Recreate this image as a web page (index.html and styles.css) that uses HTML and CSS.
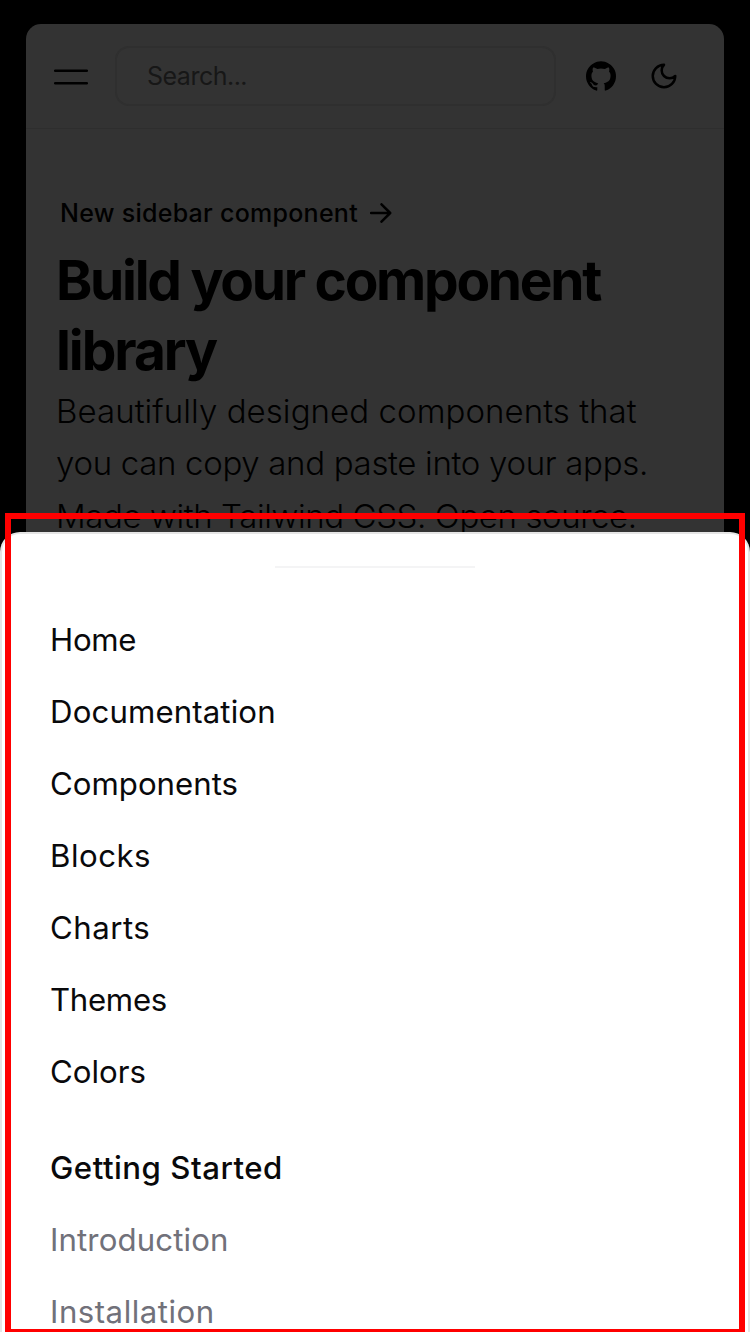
FILE: index.html
```
<!DOCTYPE html>
<html lang="en">
<head>
<meta charset="utf-8">
<title>Build your component library</title>
<link rel="stylesheet" href="styles.css">
</head>
<body>
<div class="page">
  <header class="topbar">
    <svg class="menu" viewBox="0 0 34 18"><path d="M1.2 2.7H32.8M1.2 15.3H32.8"/></svg>
    <div class="search"><span>Search...</span></div>
    <svg class="github" viewBox="0 0 438.549 438.549"><path d="M409.132 114.573c-19.608-33.596-46.205-60.194-79.798-79.8-33.598-19.607-70.277-29.408-110.063-29.408-39.781 0-76.472 9.804-110.063 29.408-33.596 19.605-60.192 46.204-79.8 79.8C9.803 148.168 0 184.854 0 224.63c0 47.78 13.94 90.745 41.827 128.906 27.884 38.164 63.906 64.572 108.063 79.227 5.14.954 8.945.283 11.419-1.996 2.475-2.282 3.711-5.14 3.711-8.562 0-.571-.049-5.708-.144-15.417a2549.81 2549.81 0 01-.144-25.406l-6.567 1.136c-4.187.767-9.469 1.092-15.846 1-6.374-.089-12.991-.757-19.842-1.999-6.854-1.231-13.229-4.086-19.13-8.559-5.898-4.473-10.085-10.328-12.56-17.556l-2.855-6.57c-1.903-4.374-4.899-9.233-8.992-14.559-4.093-5.331-8.232-8.945-12.419-10.848l-1.999-1.431c-1.332-.951-2.568-2.098-3.711-3.429-1.142-1.331-1.997-2.663-2.568-3.997-.572-1.335-.098-2.43 1.427-3.289 1.525-.859 4.281-1.276 8.28-1.276l5.708.853c3.807.763 8.516 3.042 14.133 6.851 5.614 3.806 10.229 8.754 13.846 14.842 4.38 7.806 9.657 13.754 15.846 17.847 6.184 4.093 12.419 6.136 18.699 6.136 6.28 0 11.704-.476 16.274-1.423 4.565-.952 8.848-2.383 12.847-4.285 1.713-12.758 6.377-22.559 13.988-29.41-10.848-1.14-20.601-2.857-29.264-5.14-8.658-2.286-17.605-5.996-26.835-11.14-9.235-5.137-16.896-11.516-22.985-19.126-6.09-7.614-11.088-17.61-14.987-29.979-3.901-12.374-5.852-26.648-5.852-42.826 0-23.035 7.52-42.637 22.557-58.817-7.044-17.318-6.379-36.732 1.997-58.24 5.52-1.715 13.706-.428 24.554 3.853 10.85 4.283 18.794 7.952 23.84 10.994 5.046 3.041 9.089 5.618 12.135 7.708 17.705-4.947 35.976-7.421 54.818-7.421s37.117 2.474 54.823 7.421l10.849-6.849c7.419-4.57 16.18-8.758 26.262-12.565 10.088-3.805 17.802-4.853 23.134-3.138 8.562 21.509 9.325 40.922 2.279 58.24 15.036 16.18 22.559 35.787 22.559 58.817 0 16.178-1.958 30.497-5.853 42.966-3.9 12.471-8.941 22.457-15.125 29.979-6.191 7.521-13.901 13.85-23.131 18.986-9.232 5.14-18.182 8.85-26.84 11.136-8.662 2.286-18.415 4.004-29.263 5.146 9.894 8.562 14.842 22.077 14.842 40.539v60.237c0 3.422 1.19 6.279 3.572 8.562 2.379 2.279 6.136 2.95 11.276 1.995 44.163-14.653 80.185-41.062 108.068-79.226 27.88-38.161 41.825-81.126 41.825-128.906-.01-39.771-9.818-76.454-29.414-110.049z"/></svg>
    <svg class="moon" viewBox="0 0 24 24"><path d="M12 3a6 6 0 0 0 9 9 9 9 0 1 1-9-9Z"/></svg>
  </header>
  <main class="hero">
    <div class="announce"><span>New sidebar component</span><svg class="arrow" viewBox="0 0 22 20"><path d="M1 10H20M11.5 1.3L20.2 10L11.5 18.7"/></svg></div>
    <h1 class="title"><span>Build your component</span><br><span class="title-end">library</span></h1>
    <p class="lead"><span class="lead-a">Beautifully designed components that</span><br><span class="lead-b">you can copy and paste into your apps.</span><br><span class="lead-c">Made with Tailwind CSS. Open source.</span></p>
  </main>
</div>
<div class="sheet">
  <div class="handle"></div>
  <nav class="nav">
    <a class="tight">Home</a>
    <a class="slight">Documentation</a>
    <a>Components</a>
    <a class="wide">Blocks</a>
    <a class="wide">Charts</a>
    <a class="tight">Themes</a>
    <a>Colors</a>
  </nav>
  <nav class="nav">
    <h2 class="wide">Getting Started</h2>
    <a class="muted slight">Introduction</a>
    <a class="muted wide">Installation</a>
  </nav>
</div>
<div class="frame"></div>
</body>
</html>
```
FILE: styles.css
```
* { box-sizing: border-box; margin: 0; padding: 0; }
html, body { width: 750px; height: 1332px; overflow: hidden; }
body { background: #000; font-family: Inter, "Liberation Sans", sans-serif; position: relative; }
svg { display: block; flex: none; fill: none; stroke: #000; }

.page { margin: 24px 26px 0; height: 508px; overflow: hidden; background: #333; color: #000; border-radius: 15px 15px 0 0; }
.topbar { height: 105px; border-bottom: 1px solid #2e2e2e; display: flex; align-items: center; padding-left: 28px; }
.menu { width: 34px; height: 18px; stroke-width: 2.5; stroke-linecap: round; margin-top: 1px; }
.search { width: 441px; height: 60px; margin-left: 27px; border: 2px solid #2f2f2f; border-radius: 14px; padding-left: 30px; display: flex; align-items: center; font-size: 25px; letter-spacing: -0.5px; color: #171717; }
.github { width: 30px; height: 30px; margin-left: 30px; fill: #000; stroke: none; }
.moon { width: 30px; height: 30px; margin-left: 33px; stroke-width: 2; stroke-linecap: round; stroke-linejoin: round; }

.hero { padding: 66px 0 0 30px; white-space: nowrap; }
.announce { height: 36px; padding-left: 4px; display: flex; align-items: center; gap: 12px; font-size: 25px; font-weight: 500; letter-spacing: 0.27px; }
.arrow { width: 22px; height: 20px; stroke-width: 2.5; stroke-linecap: round; stroke-linejoin: round; }
.title { margin-top: 14px; font-size: 55px; line-height: 70px; font-weight: 700; letter-spacing: -2.28px; }
.title-end { letter-spacing: -2.05px; }
.lead { font-size: 33px; line-height: 52.3px; font-weight: 300; }
.lead-a { letter-spacing: 0.06px; }
.lead-b { letter-spacing: -0.32px; }
.lead-c { letter-spacing: -0.42px; }

.sheet { height: 820px; background: #fff; border: 2px solid #e5e5e5; border-bottom: 0; border-radius: 20px 20px 0 0; padding: 32px 48px 0; color: #09090b; }
.handle { width: 200px; height: 2px; margin: 0 auto; background: #f4f4f5; }
.nav { margin-top: 48px; display: grid; gap: 24px; font-size: 31.2px; line-height: 48px; }
.nav h2 { font-size: inherit; font-weight: 500; }
.tight { letter-spacing: -0.3px; }
.slight { letter-spacing: 0.12px; }
.wide { letter-spacing: 0.5px; }
.nav .muted { color: #71717a; }

.frame { position: absolute; left: 5px; top: 513px; width: 740px; height: 822px; border: 6px solid #f00; }
```
